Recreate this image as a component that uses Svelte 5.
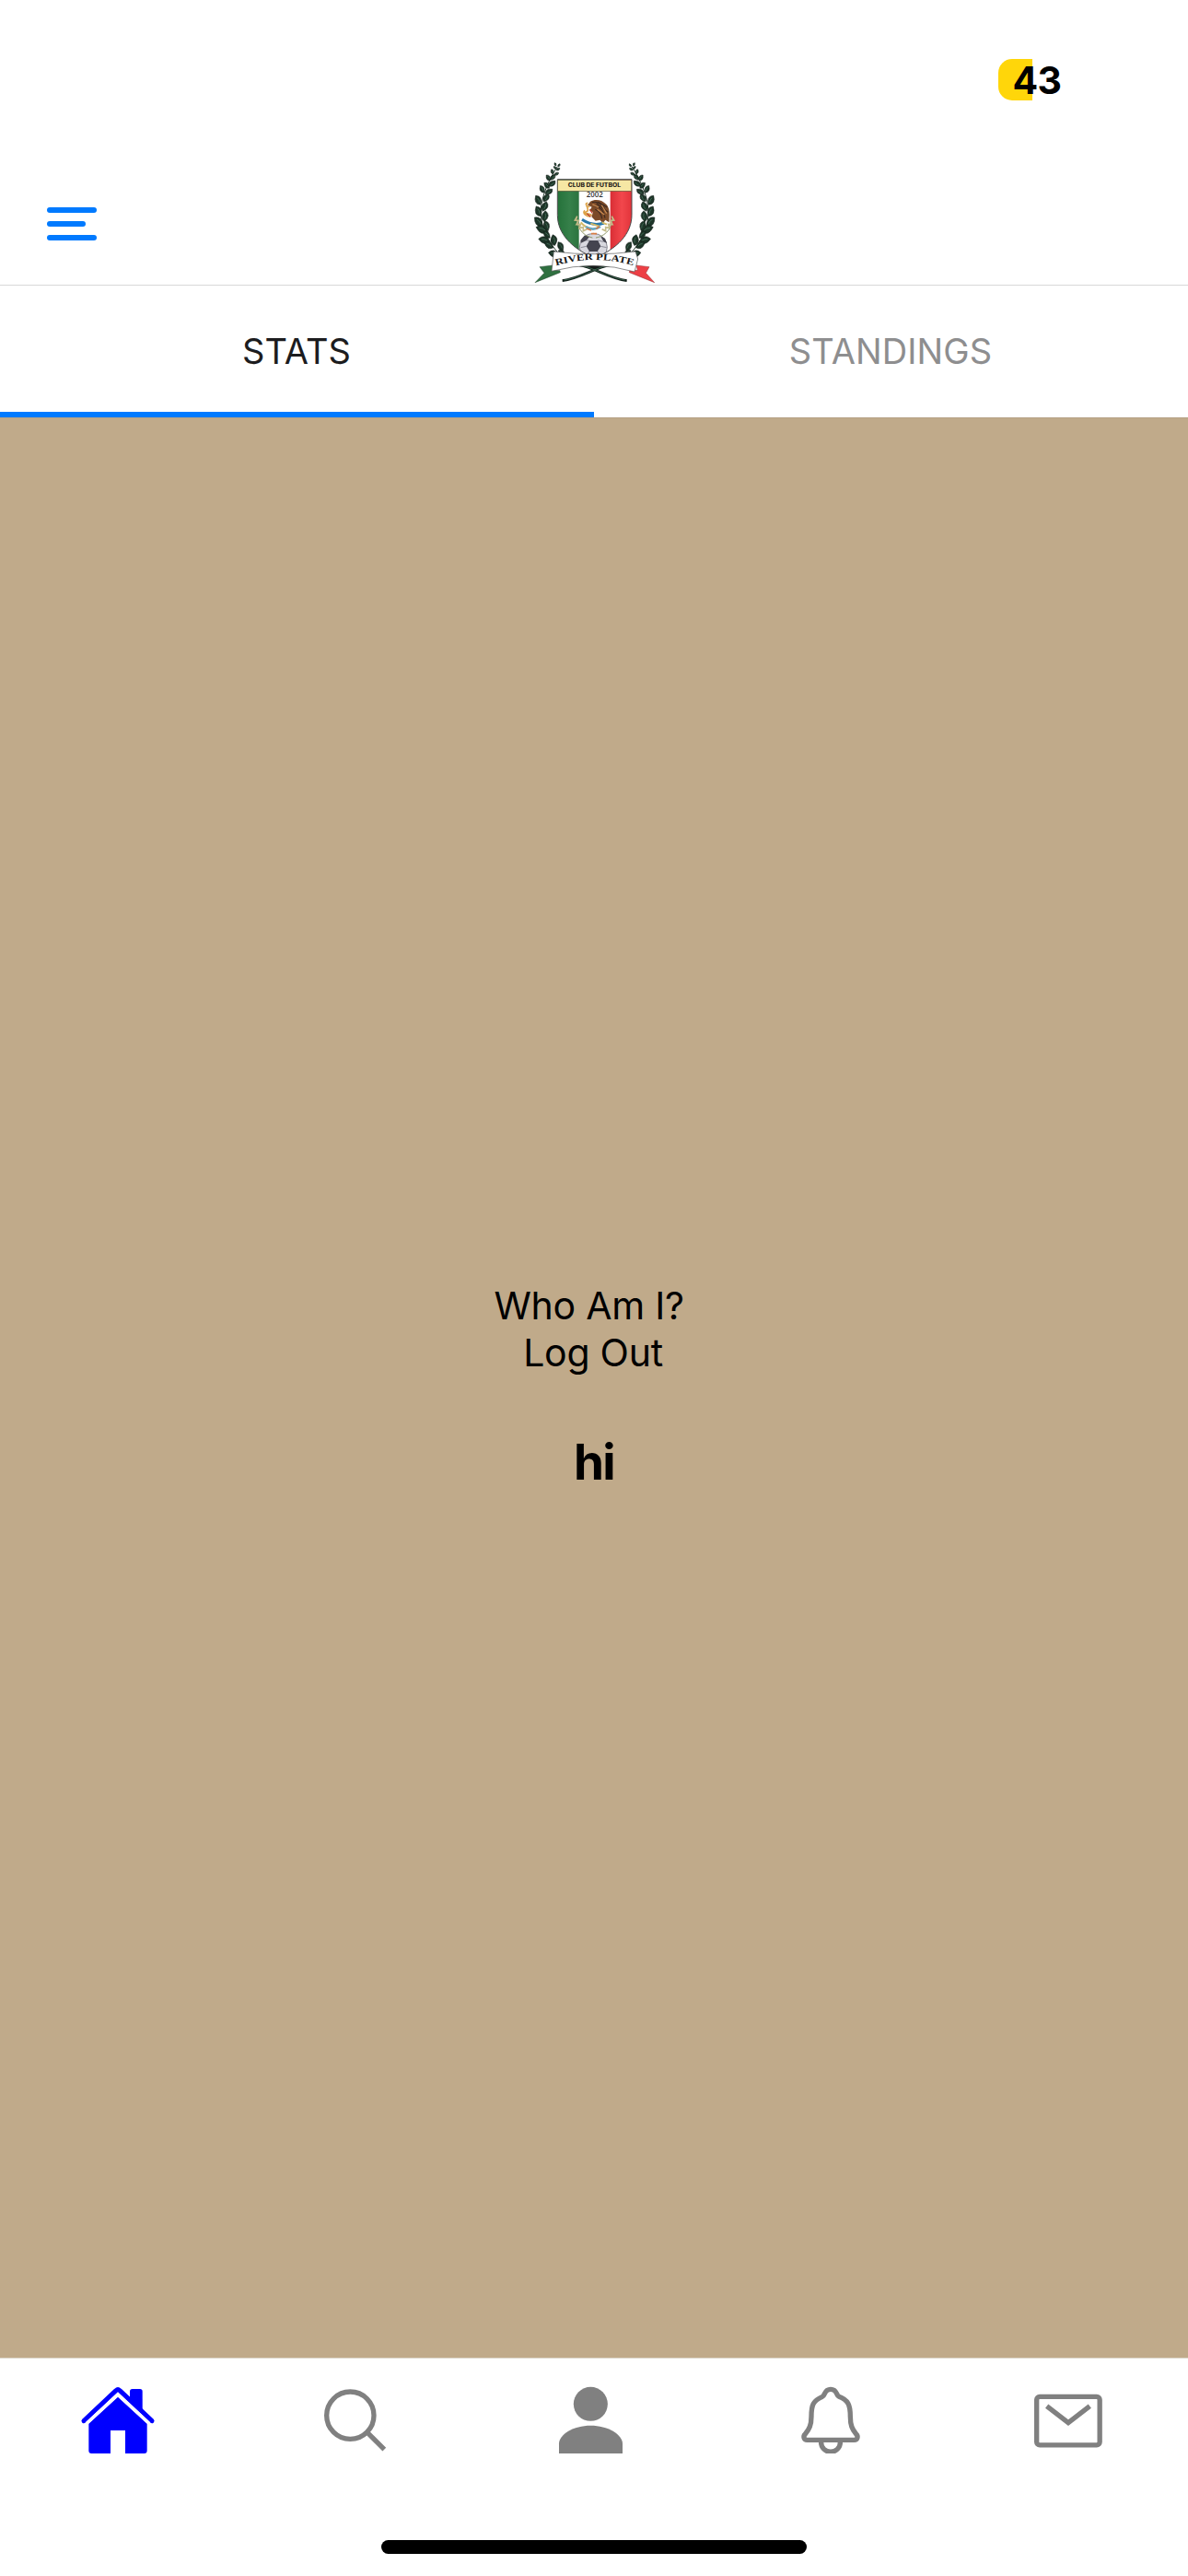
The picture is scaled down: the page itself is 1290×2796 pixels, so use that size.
<script>
  const tabs = [
    { label: 'STATS', active: true },
    { label: 'STANDINGS', active: false },
  ];

  // Laurel leaves of the left branch: x, y, length, rotation. The right branch mirrors them.
  const leaves = [
    [129, 55, 11, 60], [141, 58, 11, 120], [128, 66, 12, 35], [138, 71, 13, 140],
    [119, 79, 16, 70], [133, 86, 15, 150], [106, 99, 22, 55], [121, 97, 22, 125],
    [101, 124, 24, 45], [118, 118, 28, 140], [86, 136, 26, 62], [108, 144, 28, 145],
    [73, 172, 34, 62], [99, 164, 30, 120], [74, 208, 36, 65], [94, 192, 34, 110],
    [74, 242, 38, 48], [95, 224, 36, 95], [86, 267, 42, 20], [100, 255, 34, 70],
    [93, 302, 38, 12], [101, 284, 30, 45], [108, 318, 34, 30], [124, 302, 36, 80],
    [124, 347, 36, 14], [146, 322, 32, 60], [150, 344, 28, 40],
  ];
</script>

{#snippet branch()}
  <path class="stem" d="M136 62C108 105 84 158 82 205C80 265 112 325 160 362" />
  {#each leaves as [x, y, len, rot]}
    <g transform="translate({x} {y}) rotate({rot})">
      <path class="leaf" d="M{-len / 2} 0Q{-len / 8} {-len * 0.6} {len / 2} 0Q{len / 8} {len * 0.58} {-len / 2} 0Z" />
      <path class="vein" d="M{-len / 4} -1Q0 {-len * 0.13} {len / 4} -1" />
    </g>
  {/each}
{/snippet}

<div class="screen">
  <div class="status"><span class="battery">43</span></div>

  <header>
    <div class="side">
      <div class="menu"><i></i><i class="short"></i><i></i></div>
    </div>
    <svg class="crest" viewBox="54 48 402 396">
      <defs>
        <clipPath id="shield"><path d="M136 104H378V220C378 282 330 330 257 360C184 330 136 282 136 220Z" /></clipPath>
        <linearGradient id="green" x1="0" x2="1"><stop offset="0" stop-color="#237038" /><stop offset=".6" stop-color="#36804a" /><stop offset="1" stop-color="#2b723e" /></linearGradient>
        <linearGradient id="red" x1="0" x2="1"><stop offset="0" stop-color="#d92e35" /><stop offset=".5" stop-color="#f2474c" /><stop offset="1" stop-color="#df3037" /></linearGradient>
      </defs>
      {@render branch()}
      <g transform="translate(514 0) scale(-1 1)">{@render branch()}</g>
      <g clip-path="url(#shield)">
        <rect x="130" y="100" width="78" height="265" fill="url(#green)" />
        <rect x="206" y="100" width="104" height="265" fill="#fff" />
        <rect x="308" y="100" width="76" height="265" fill="url(#red)" />
        <circle cx="253" cy="325" r="45" fill="#d8d8df" stroke="#555561" stroke-width="2" />
        <path d="M240 303H268L277 322L266 339H240L230 322ZM211 302L225 286L240 291L230 303L213 311ZM276 289L291 296L297 312L286 307Z" fill="#44444f" />
        <path d="M230 303L240 303M268 303L285 307M230 322L212 326M277 322L296 326M240 339L230 352M266 339L277 352" stroke="#666674" stroke-width="2" />
      </g>
      <path d="M200 222C195 252 214 288 250 294M313 222C320 252 299 288 261 294" fill="none" stroke="#8c9669" stroke-width="3" />
      <path d="M200 225l-7 12 12 1-7 13 13-1-4 13 13-3 0 12 12-6M313 225l7 12-12 1 7 13-13-1 4 13-13-3 0 12-12-6" fill="none" stroke="#c4bb88" stroke-width="5" />
      <path d="M243 176C259 166 282 171 292 183C308 194 306 221 304 244L292 236L284 247L274 236L260 239L247 226L252 211L241 205L248 194L234 188Z" fill="#7b4a28" />
      <path d="M249 179C266 174 285 185 291 204M257 190C275 192 287 207 291 230M259 202C271 207 279 219 281 232M263 182L301 211M268 178L298 195" fill="none" stroke="#3c2920" stroke-width="3.500" />
      <path d="M250 185L270 195M266 202L289 219M280 188L296 215" stroke="#c98b52" stroke-width="3.500" />
      <path d="M235 181C222 183 235 190 232 196M241 193C222 190 245 205 229 210C218 218 242 213 248 222M225 205C215 214 231 226 244 225" fill="none" stroke="#dda247" stroke-width="5" />
      <path d="M241 202L250 214M232 216L244 226" stroke="#bd3c29" stroke-width="4" />
      <path d="M216 235Q252 259 288 246" fill="none" stroke="#2878a9" stroke-width="9" />
      <path d="M212 244Q228 263 248 264M244 248L272 257M281 244L297 251" fill="none" stroke="#d4ba68" stroke-width="6" />
      <path d="M228 258Q251 274 276 258" fill="none" stroke="#67a7c0" stroke-width="8" />
      <path d="M231 264L246 270M262 265L273 257M246 281H264" stroke="#d77b43" stroke-width="5" />
      <path d="M136 104H378V220C378 282 330 330 257 360C184 330 136 282 136 220Z" fill="none" stroke="#47494a" stroke-width="3" />
      <rect x="137" y="106" width="240" height="36" fill="#f6e7a4" stroke="#5d593e" stroke-width="2" />
      <text class="club" x="170" y="129" textLength="172" lengthAdjust="spacingAndGlyphs">CLUB DE FUTBOL</text>
      <text class="year" x="230" y="162" textLength="54" lengthAdjust="spacingAndGlyphs">2002</text>
      <path d="M206 384Q257 367 309 384L256 398Z" fill="#171b1a" />
      <path d="M152 434C210 427 260 390 306 384M362 434C304 427 254 390 208 384" fill="none" stroke="#111f19" stroke-width="8" />
      <path d="M158 432C210 424 258 394 300 384M356 432C304 424 256 394 214 384" fill="none" stroke="#4d8065" stroke-width="2" />
      <path d="M120 384L78 389L93 409L63 440L145 407L144 401L117 400Z" fill="#2f7040" stroke="#24452f" stroke-width="1.5" />
      <path d="M393 384L435 389L424 409L452 440L370 407L371 401L397 400Z" fill="#ed3f45" stroke="#8e3033" stroke-width="1.5" />
      <path d="M124 339Q257 356 390 339L398 363L387 405Q257 366 117 403Z" fill="#fff" stroke="#555" stroke-width="2" />
      <path id="ribbon" d="M131 385Q257 347 386 385" fill="none" />
      <text class="river"><textPath href="#ribbon" textLength="256" lengthAdjust="spacingAndGlyphs">RIVER PLATE</textPath></text>
    </svg>
    <div class="side"></div>
  </header>

  <div class="tabs">
    {#each tabs as tab}
      <div class="tab" class:active={tab.active}><span>{tab.label}</span></div>
    {/each}
  </div>

  <main>
    <div class="line who">Who Am I?</div>
    <div class="line out">Log Out</div>
    <div class="hi">hi</div>
  </main>

  <nav>
    <svg viewBox="-180 30 774 309">
      <g fill="#00f">
        <path d="M243 155V137Q243 129 251 129H276Q284 129 284 137V200L243 162Z" />
        <path d="M204 155L299 242V330Q299 339 290 339H228V264H180V339H118Q109 339 109 330V242Z" />
      </g>
      <path d="M93 233L198 134Q204 128 210 134L315 233" fill="none" stroke="#00f" stroke-width="15" stroke-linecap="round" />
      <path d="M103 240L204 147L305 240" fill="none" stroke="#fff" stroke-width="10" />
    </svg>
    <svg viewBox="594 30 774 309">
      <circle cx="961" cy="215" r="77" class="line-icon" />
      <path d="M1017 271L1072 326" class="line-icon" />
    </svg>
    <svg viewBox="-192 30 774 309">
      <circle cx="184" cy="178" r="55.5" fill="gray" />
      <path d="M81 339V307C81 277 128 248 184 248S288 277 288 307V339Z" fill="gray" />
    </svg>
    <svg viewBox="582 30 774 309">
      <path class="line-icon" d="M889 295H1043C1053 295 1057 284 1049 276C1036 260 1030 247 1030 219C1030 181 1023 165 993 154C983 150 988 130 966 130S949 150 939 154C909 167 903 181 903 219C903 247 896 260 883 276C875 284 879 295 889 295Z" />
      <path class="line-icon" d="M934.500 300C934.500 345 997.500 345 997.500 300" />
    </svg>
    <svg viewBox="-144 30 774 309">
      <rect class="line-icon" x="137" y="154" width="205.500" height="157.500" rx="10" />
      <path class="line-icon" d="M170 185L240 239L310 185" />
    </svg>
  </nav>
  <div class="home-bar"></div>
</div>

<style>
  :global(body) { margin: 0; background: #fff; }
  .screen {
    width: 1290px; height: 2796px; overflow: hidden;
    display: flex; flex-direction: column;
    background: #fff; color: #000;
    font-family: Inter, "Liberation Sans", sans-serif;
  }
  .status {
    box-sizing: border-box; height: 176px; flex: none;
    padding: 64px 139px 0 0; display: flex; justify-content: flex-end;
  }
  .battery {
    box-sizing: border-box; width: 67px; height: 45px; padding-left: 15.5px;
    border-radius: 15px 0 0 15px;
    background: linear-gradient(90deg, #ffd60a 37px, transparent 37px);
    font-size: 41px; font-weight: 700; line-height: 46px; letter-spacing: -0.8px; white-space: nowrap;
  }
  header {
    box-sizing: border-box; height: 134px; flex: none;
    display: flex; border-bottom: 1px solid #d8d8d8;
  }
  .side { flex: 1; padding: 49px 0 0 51px; }
  .menu { display: flex; flex-direction: column; gap: 9px; width: 54px; }
  .menu i { height: 6px; border-radius: 3px; background: #007aff; }
  .menu .short { width: 42px; }
  .crest { width: 134px; height: 132px; flex: none; }
  .stem { fill: none; stroke: #24392e; stroke-width: 3; }
  .leaf { fill: #1d3528; stroke: #101b16; stroke-width: 1.5; }
  .vein { fill: none; stroke: #4a7560; stroke-width: 2; }
  .club { font: 800 18px Inter, sans-serif; fill: #29251b; }
  .year { font: 600 24px "Open Sans", sans-serif; fill: #333; }
  .river { font: 700 30px "Liberation Serif", serif; fill: #161616; }
  .tabs { display: flex; height: 143px; flex: none; }
  .tab {
    box-sizing: border-box; flex: 1; padding: 5px 1px 0 0;
    border-bottom: 6px solid transparent;
    display: flex; align-items: center; justify-content: center;
    font-size: 38px; letter-spacing: 0.1px; color: #8e8e8f;
  }
  .tab.active { color: #1c1c1e; border-color: #007aff; }
  main {
    box-sizing: border-box; height: 2106px; flex: none; padding-top: 939px;
    display: flex; flex-direction: column; align-items: center;
    background: #c0aa8a; box-shadow: inset 0 1px #b5a185;
  }
  .line { font-size: 41px; line-height: 51px; letter-spacing: -0.25px; white-space: nowrap; }
  .who { padding-right: 11px; }
  .out { padding-right: 2px; }
  .hi { margin-top: 63px; font-size: 53px; font-weight: 700; line-height: 60px; letter-spacing: -1.8px; }
  nav { display: flex; height: 103px; flex: none; border-top: 1px solid #ddd8cd; }
  nav svg { width: 258px; height: 103px; flex: none; }
  .line-icon { fill: none; stroke: gray; stroke-width: 16; }
  .home-bar {
    width: 462px; height: 15px; margin: 94px auto 0; flex: none;
    border-radius: 8px; background: #000;
  }
</style>
